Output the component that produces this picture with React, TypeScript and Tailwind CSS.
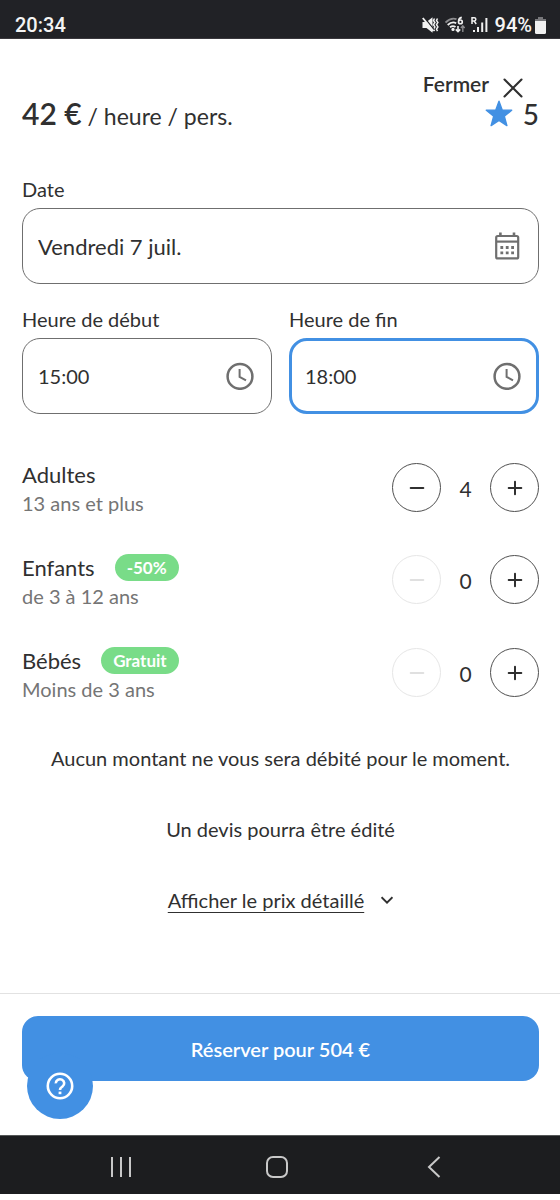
import { useState } from "react";

function CalendarIcon() {
  return (
    <svg className="h-7 w-7" viewBox="0 0 28 28" fill="none" stroke="#6f6f6f" strokeWidth="2.2" aria-hidden="true">
      <rect x="3.2" y="4" width="22" height="22.4" rx="1.5" />
      <path d="M3 9.6h22" />
      <path d="M7.4 0.4v4M21 0.4v4" strokeWidth="2.6" />
      <path d="M7.4 15.5h2.8M12.8 15.5h2.8M18.2 15.5h2.8M7.4 20.8h2.8M12.8 20.8h2.8M18.2 20.8h2.8" strokeWidth="2.8" />
    </svg>
  );
}

function ClockIcon() {
  return (
    <svg className="h-7 w-7" viewBox="0 0 28 28" fill="none" stroke="#6f6f6f" strokeWidth="2.5" aria-hidden="true">
      <circle cx="14" cy="14.4" r="12.4" />
      <path d="M13.6 7v7.8l6.4 3.6" strokeWidth="2" />
    </svg>
  );
}

type FieldProps = {
  id: string;
  label: string;
  value: string;
  icon: "calendar" | "clock";
  active?: boolean;
};

function Field({ id, label, value, icon, active }: FieldProps) {
  return (
    <div className="flex min-w-0 flex-1 flex-col gap-[7px]">
      <label htmlFor={id} className="text-[20px] leading-6 text-[#303030]">
        {label}
      </label>
      <div
        className={
          active
            ? "flex h-[76px] items-center rounded-[18px] border-3 border-[#4290e3] pr-[15px] pl-[13px]"
            : "flex h-[76px] items-center rounded-[18px] border border-[#6f6f6f] pr-[17px] pl-[15px]"
        }
      >
        <input
          id={id}
          defaultValue={value}
          readOnly
          className={
            icon === "calendar"
              ? "w-full min-w-0 flex-1 bg-transparent text-[22px] text-[#303030] outline-none"
              : "w-full min-w-0 flex-1 bg-transparent text-[20px] text-[#303030] outline-none"
          }
        />
        {icon === "calendar" ? <CalendarIcon /> : <ClockIcon />}
      </div>
    </div>
  );
}

type CounterProps = { title: string; hint: string; badge?: string; initial: number; min: number };

function Counter({ title, hint, badge, initial, min }: CounterProps) {
  const [count, setCount] = useState(initial);
  return (
    <div className="flex items-start justify-between">
      <div>
        <div className="flex items-center gap-5">
          <span className="text-[22px] leading-[26px]">{title}</span>
          {badge && (
            <span className="rounded-full bg-[#79dc88] px-3 text-[17px] leading-[27px] font-bold text-white">
              {badge}
            </span>
          )}
        </div>
        <p className="text-[20px] leading-[30px] text-[#757575]">{hint}</p>
      </div>
      <div className="flex items-center pt-px">
        <button
          type="button"
          aria-label={`Retirer : ${title}`}
          disabled={count <= min}
          onClick={() => setCount(count - 1)}
          className="flex size-[49px] items-center justify-center rounded-full border border-[#505050] text-[#303030] disabled:border-[#e6e6e6] disabled:text-[#e0e0e0]"
        >
          <svg className="size-4" viewBox="0 0 16 16" stroke="currentColor" strokeWidth="2" strokeLinecap="round" aria-hidden="true">
            <path d="M1.7 8h12.6" />
          </svg>
        </button>
        <output className="w-[49px] pt-[3px] text-center text-[21px] leading-7">{count}</output>
        <button
          type="button"
          aria-label={`Ajouter : ${title}`}
          onClick={() => setCount(count + 1)}
          className="flex size-[49px] items-center justify-center rounded-full border border-[#505050] text-[#303030]"
        >
          <svg className="size-4" viewBox="0 0 16 16" stroke="currentColor" strokeWidth="2" strokeLinecap="round" aria-hidden="true">
            <path d="M1.7 8h12.6M8 1.7v12.6" />
          </svg>
        </button>
      </div>
    </div>
  );
}

function StatusBar() {
  return (
    <header className="flex h-[39px] items-end justify-between border-b border-[#3a383d] bg-[#212226] pr-[14px] pl-[15px] font-['Roboto',sans-serif] text-[20px] leading-[26px] font-medium text-[#f4f4f4]">
      <span>20:34</span>
      <div className="flex items-center gap-[6px]">
        <svg className="h-[18px] w-[17px]" viewBox="0 0 17 18" aria-hidden="true">
          <path d="M0.5 6h4l6-4.8v15.6l-6-4.8h-4z" fill="#f1f1f1" />
          <path d="M12.5 2.5l-1 2 1.4 2-1.4 2.2 1.4 2.2-1.4 2.2 1 2M15.5 2.5l-1 2 1.4 2-1.4 2.2 1.4 2.2-1.4 2.2 1 2" fill="none" stroke="#f1f1f1" strokeWidth="1.5" />
          <path d="M2 1.2l10 12.4" stroke="#212226" strokeWidth="1.4" />
          <path d="M0.8 2l10.5 13" stroke="#f1f1f1" strokeWidth="1.9" />
        </svg>
        <svg className="h-[18px] w-[20px]" viewBox="0 0 20 18" fill="none" aria-hidden="true">
          <path d="M0.5 6.5Q6 1.2 11.5 3.2" stroke="#8b8b8e" strokeWidth="1.8" />
          <path d="M2.7 9Q7 5 11.2 7.2M5 11.3Q7.8 9 10.5 11" stroke="#f1f1f1" strokeWidth="1.8" />
          <circle cx="8" cy="13.4" r="1.6" fill="#f1f1f1" />
          <path d="M16.8 1.4Q13.6 2 13.6 5.2" stroke="#f1f1f1" strokeWidth="1.6" />
          <circle cx="15.4" cy="5.9" r="1.9" stroke="#f1f1f1" strokeWidth="1.6" />
          <path d="M13 10v5.5M10.8 13.4l2.2 2.3 2.2-2.3" stroke="#f1f1f1" strokeWidth="1.6" />
          <path d="M17.8 16v-6M15.9 12l1.9-2.2 1.9 2.2" stroke="#8b8b8e" strokeWidth="1.4" />
        </svg>
        <svg className="h-[18px] w-[17px]" viewBox="0 0 17 18" fill="none" stroke="#f1f1f1" aria-hidden="true">
          <path d="M1 8V1.7h2.2a1.6 1.6 0 0 1 0 3.3H1M3.2 5l2 3" strokeWidth="1.5" />
          <path d="M3 16v-2M7 16V11M11.2 16V6.5M15.4 16V2" strokeWidth="2" />
        </svg>
        <div className="flex items-center gap-[3px] pl-px">
          <span>94%</span>
          <svg className="h-[17px] w-[11px]" viewBox="0 0 11 17" aria-hidden="true">
            <path d="M3 0h5v2h3v3H0V2h3z" fill="#77777a" />
            <path d="M0 4h11v11.5a1.5 1.5 0 0 1-1.5 1.5h-8A1.5 1.5 0 0 1 0 15.5z" fill="#f1f1f1" />
          </svg>
        </div>
      </div>
    </header>
  );
}

function NavBar() {
  return (
    <nav aria-label="Système" className="flex h-[59px] items-center justify-around border-t border-[#555858] bg-[#1c1d1f] pt-1 pr-12 pl-[43px] text-[#c8c8c8]">
      <button type="button" aria-label="Applications récentes" className="p-1">
        <svg className="size-6" viewBox="0 0 24 24" stroke="currentColor" strokeWidth="2" aria-hidden="true">
          <path d="M3 2v20M12 2v20M21 2v20" />
        </svg>
      </button>
      <button type="button" aria-label="Accueil" className="p-1">
        <svg className="size-6" viewBox="0 0 24 24" fill="none" stroke="currentColor" strokeWidth="2" aria-hidden="true">
          <rect x="2" y="2" width="20" height="20" rx="6" />
        </svg>
      </button>
      <button type="button" aria-label="Retour" className="p-1">
        <svg className="size-6" viewBox="0 0 24 24" fill="none" stroke="currentColor" strokeWidth="2" aria-hidden="true">
          <path d="M17.5 2L7 12l10.5 10" />
        </svg>
      </button>
    </nav>
  );
}

export default function App() {
  return (
    <div className="flex min-h-screen flex-col bg-white font-['Lato',sans-serif] text-[#303030]">
      <StatusBar />
      <main className="flex flex-1 flex-col pt-8 pr-[21px] pl-[22px]">
        <button type="button" className="flex h-[26px] items-center gap-[14px] self-end pr-4 text-[21px] font-semibold">
          Fermer
          <svg className="mt-2 size-5" viewBox="0 0 20 20" stroke="currentColor" strokeWidth="2.1" strokeLinecap="round" aria-hidden="true">
            <path d="M1.5 1.5l17 17M18.5 1.5l-17 17" />
          </svg>
        </button>
        <div className="mt-0.5 flex h-[30px] items-center justify-between">
          <p className="text-[23px] leading-[30px]">
            <span className="text-[30px] font-semibold">42 €</span> / heure / pers.
          </p>
          <div className="flex items-center gap-[10px] text-[28px] leading-[30px] font-medium">
            <svg className="size-7" viewBox="0 0 28 28" fill="#4290e3" stroke="#4290e3" strokeWidth="1.4" strokeLinejoin="round" aria-hidden="true">
              <path d="M14 1.2l3.2 8.7 9.5.4-7.4 5.9 2.6 9.4-7.9-5.3-7.9 5.3 2.6-9.4-7.4-5.9 9.5-.4z" />
            </svg>
            5
          </div>
        </div>

        <form className="mt-12 flex flex-col gap-[23px]">
          <Field id="date" label="Date" value="Vendredi 7 juil." icon="calendar" />
          <div className="flex gap-[17px]">
            <Field id="start" label="Heure de début" value="15:00" icon="clock" />
            <Field id="end" label="Heure de fin" value="18:00" icon="clock" active />
          </div>
        </form>

        <section className="mt-12 flex flex-col gap-9">
          <Counter title="Adultes" hint="13 ans et plus" initial={4} min={1} />
          <Counter title="Enfants" hint="de 3 à 12 ans" badge="-50%" initial={0} min={0} />
          <Counter title="Bébés" hint="Moins de 3 ans" badge="Gratuit" initial={0} min={0} />
        </section>

        <section className="mt-10 flex flex-col items-center gap-[43px] pb-[76px] text-center text-[20px] leading-7">
          <p>Aucun montant ne vous sera débité pour le moment.</p>
          <p>Un devis pourra être édité</p>
          <button type="button" className="flex items-center gap-[17px]">
            <span className="underline decoration-1 underline-offset-4">Afficher le prix détaillé</span>
            <svg className="h-3 w-3" viewBox="0 0 12 12" fill="none" stroke="currentColor" strokeWidth="2" aria-hidden="true">
              <path d="M0.5 3.2L6 8.7l5.5-5.5" />
            </svg>
          </button>
        </section>
      </main>

      <footer className="relative border-t border-[#e2e2e2] pt-[22px] pr-[21px] pb-[54px] pl-[22px]">
        <button type="button" className="h-[65px] w-full rounded-[16px] bg-[#4290e3] text-[20px] font-semibold text-white">
          Réserver pour 504 €
        </button>
        <button
          type="button"
          aria-label="Aide"
          className="absolute bottom-4 left-[27px] flex size-[66px] items-center justify-center rounded-full bg-[#4290e3]"
        >
          <svg className="size-7" viewBox="0 0 28 28" fill="none" stroke="#ffffff" strokeWidth="2.6" aria-hidden="true">
            <circle cx="14" cy="14" r="12.2" />
            <path d="M9.8 11.4a4.2 4 0 1 1 6.7 3.1c-1.6 1.2-2.5 1.7-2.5 3.4" />
            <path d="M14 19.6v2.6" strokeWidth="2.8" />
          </svg>
        </button>
      </footer>
      <NavBar />
      <div className="h-1.5 bg-white" />
    </div>
  );
}
